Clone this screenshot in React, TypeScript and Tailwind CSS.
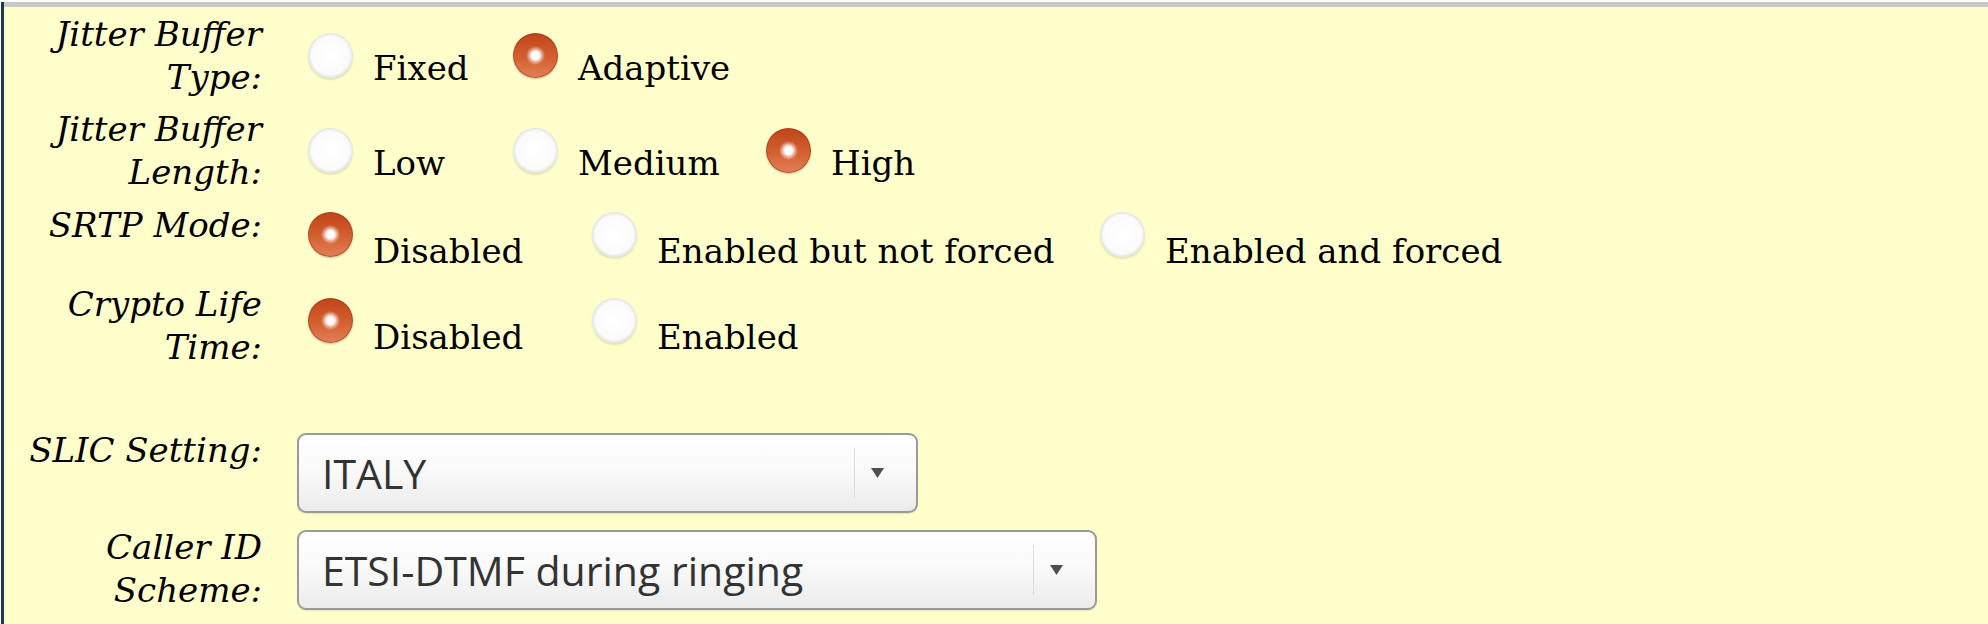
import React from "react";

const serif = { fontFamily: '"DejaVu Serif", "Liberation Serif", serif' };

function Radio({ checked }: { checked: boolean }) {
  return checked ? (
    <span className="block w-[45px] h-[45px] shrink-0 rounded-full bg-[radial-gradient(circle,#ffffff_0,#ffffff_12%,rgba(255,255,255,0.5)_20%,rgba(255,255,255,0)_30%),linear-gradient(#c0441a,#d4602f_55%,#e2805a)] shadow-[inset_0_0_0_1px_rgba(150,55,20,0.6),0_1px_2px_rgba(0,0,0,0.25)]" />
  ) : (
    <span className="block w-[45px] h-[45px] shrink-0 rounded-full bg-[radial-gradient(circle,#ffffff_0,#fbfbfb_60%,#d0d0d0_78%,#a0a0a0_89%,#b4b4b4_95%,#dedede_100%)] shadow-[0_2px_2px_rgba(0,0,0,0.12)]" />
  );
}

function Option({ label, checked, w, low }: { label: string; checked?: boolean; w: string; low?: boolean }) {
  return (
    <div className={`flex items-start shrink-0 ${w}`}>
      <Radio checked={!!checked} />
      <span className={`ml-[20px] ${low ? "mt-[18px]" : "mt-[14px]"} text-[34px] leading-[42px] text-black whitespace-nowrap`} style={serif}>
        {label}
      </span>
    </div>
  );
}

function Label({ lines }: { lines: string[] }) {
  return (
    <div className="w-[258px] shrink-0 text-right italic text-[34px] leading-[43px] text-black" style={serif}>
      {lines.map((l) => (
        <div key={l} className="whitespace-nowrap">{l}</div>
      ))}
    </div>
  );
}

function Select({ value, w }: { value: string; w: string }) {
  return (
    <div className={`relative flex items-center h-[80px] ${w} pr-[17px] rounded-[9px] border-2 border-[#9a9a9a] bg-[linear-gradient(#ffffff,#fafafa_45%,#ebebeb)] shadow-[0_1px_1px_rgba(0,0,0,0.1)]`}>
      <span className="flex-1 pl-[23px] pt-[1px] text-[41px] text-[#333333] whitespace-nowrap" style={{ fontFamily: '"Open Sans", "Noto Sans", sans-serif' }}>
        {value}
      </span>
      <span className="self-stretch my-[13px] w-px bg-[#dcdcdc]" />
      <span className="w-[44px] flex justify-center">
        <svg width="13" height="10" viewBox="0 0 13 10">
          <path d="M0 0 H13 L6.5 10 Z" fill="#4f4f4f" />
        </svg>
      </span>
    </div>
  );
}

export default function App() {
  return (
    <div className="w-[1988px] h-[624px] bg-white pt-[2px] overflow-hidden">
      <div className="flex h-full">
        <div className="w-[1px] bg-[#ffffcc]" />
        <div className="w-[3px] bg-[#1d3856]" />
        <div className="flex-1 border-t-[5px] border-[#c8c8c8] bg-[#ffffcc] pt-[6px]">
          <div className="flex h-[95px]">
            <Label lines={["Jitter Buffer", "Type:"]} />
            <div className="flex pl-[46px] pt-[20px]">
              <Option label="Fixed" w="w-[205px]" />
              <Option label="Adaptive" checked w="w-[260px]" />
            </div>
          </div>
          <div className="flex h-[96px]">
            <Label lines={["Jitter Buffer", "Length:"]} />
            <div className="flex pl-[46px] pt-[20px]">
              <Option label="Low" w="w-[205px]" />
              <Option label="Medium" w="w-[253px]" />
              <Option label="High" checked w="w-[200px]" />
            </div>
          </div>
          <div className="flex h-[79px]">
            <Label lines={["SRTP Mode:"]} />
            <div className="flex pl-[46px] pt-[8px]">
              <Option label="Disabled" checked low w="w-[284px]" />
              <Option label="Enabled but not forced" low w="w-[508px]" />
              <Option label="Enabled and forced" low w="w-[400px]" />
            </div>
          </div>
          <div className="flex h-[146px]">
            <Label lines={["Crypto Life", "Time:"]} />
            <div className="flex pl-[46px] pt-[15px]">
              <Option label="Disabled" checked low w="w-[284px]" />
              <Option label="Enabled" low w="w-[260px]" />
            </div>
          </div>
          <div className="flex h-[97px]">
            <Label lines={["SLIC Setting:"]} />
            <div className="pl-[35px] pt-[4px]">
              <Select value="ITALY" w="w-[621px]" />
            </div>
          </div>
          <div className="flex">
            <Label lines={["Caller ID", "Scheme:"]} />
            <div className="pl-[35px] pt-[4px]">
              <Select value="ETSI-DTMF during ringing" w="w-[800px]" />
            </div>
          </div>
        </div>
      </div>
    </div>
  );
}
